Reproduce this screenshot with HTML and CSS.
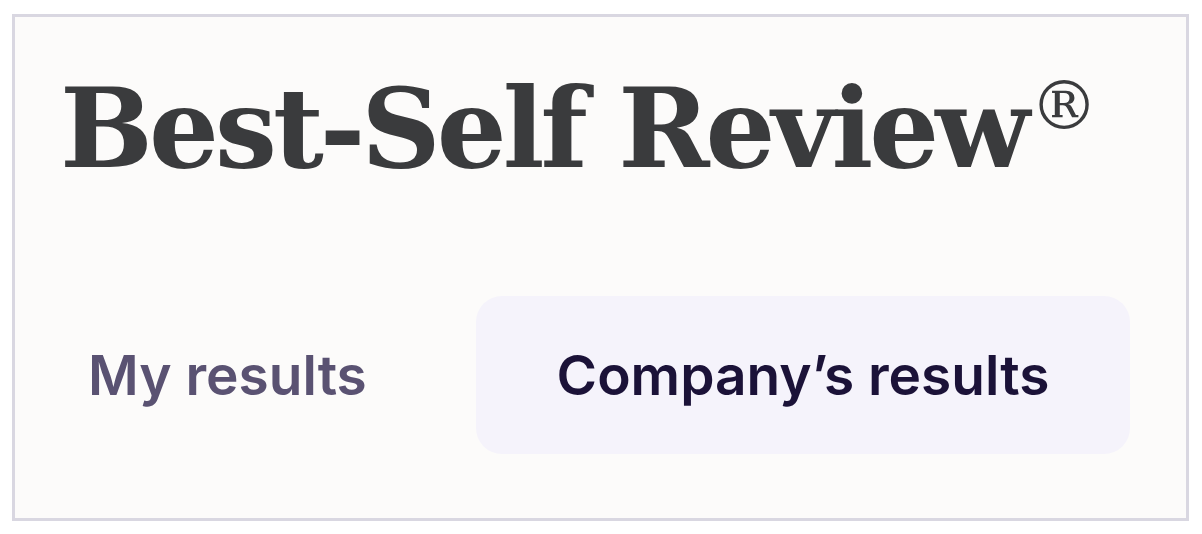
FILE: index.html
```html
<!DOCTYPE html>
<html lang="en">

<head>
    <meta charset="UTF-8">
    <meta name="viewport" content="width=device-width, initial-scale=1.0">
    <title>Best-Self Review</title>
    <link rel="stylesheet" href="styles.css">
</head>

<body>
    <div class="frame">
        <h1 class="title">Best-Self Review<span class="reg">®</span></h1>
        <div class="tabs">
            <button class="tab" type="button">My results</button>
            <button class="tab active" type="button">Company’s results</button>
        </div>
    </div>
</body>

</html>
```

FILE: styles.css
```css
body {
    margin: 0;
    background: #ffffff;
    font-family: Inter, "Noto Sans", sans-serif;
}

.frame {
    box-sizing: border-box;
    width: 1177px;
    height: 507px;
    margin: 14px 0 0 12px;
    border: 3px solid #d9d7e1;
    background-color: #fcfbfa;
    padding: 29px 0 0 45px;
}

.title {
    margin: 0;
    font-family: "DejaVu Serif", "Liberation Serif", serif;
    font-weight: bold;
    font-size: 110px;
    line-height: 120px;
    color: #3a3b3d;
    letter-spacing: -4px;
}

.reg {
    font-size: 0.62em;
    vertical-align: 0.55em;
    font-weight: normal;
    letter-spacing: 0;
    margin-left: 4px;
}

.tabs {
    display: flex;
    align-items: center;
    margin-top: 107px;
}

.tab {
    border: none;
    background: transparent;
    font-family: Inter, "Noto Sans", sans-serif;
    font-weight: 600;
    font-size: 55px;
    color: #5a5272;
    padding: 0;
    cursor: pointer;
}

.tab:first-child {
    width: 416px;
    text-align: left;
    padding-left: 28px;
    box-sizing: border-box;
}

.active {
    width: 654px;
    height: 158px;
    border-radius: 26px;
    background-color: #f5f3fb;
    color: #1b1238;
}
```
